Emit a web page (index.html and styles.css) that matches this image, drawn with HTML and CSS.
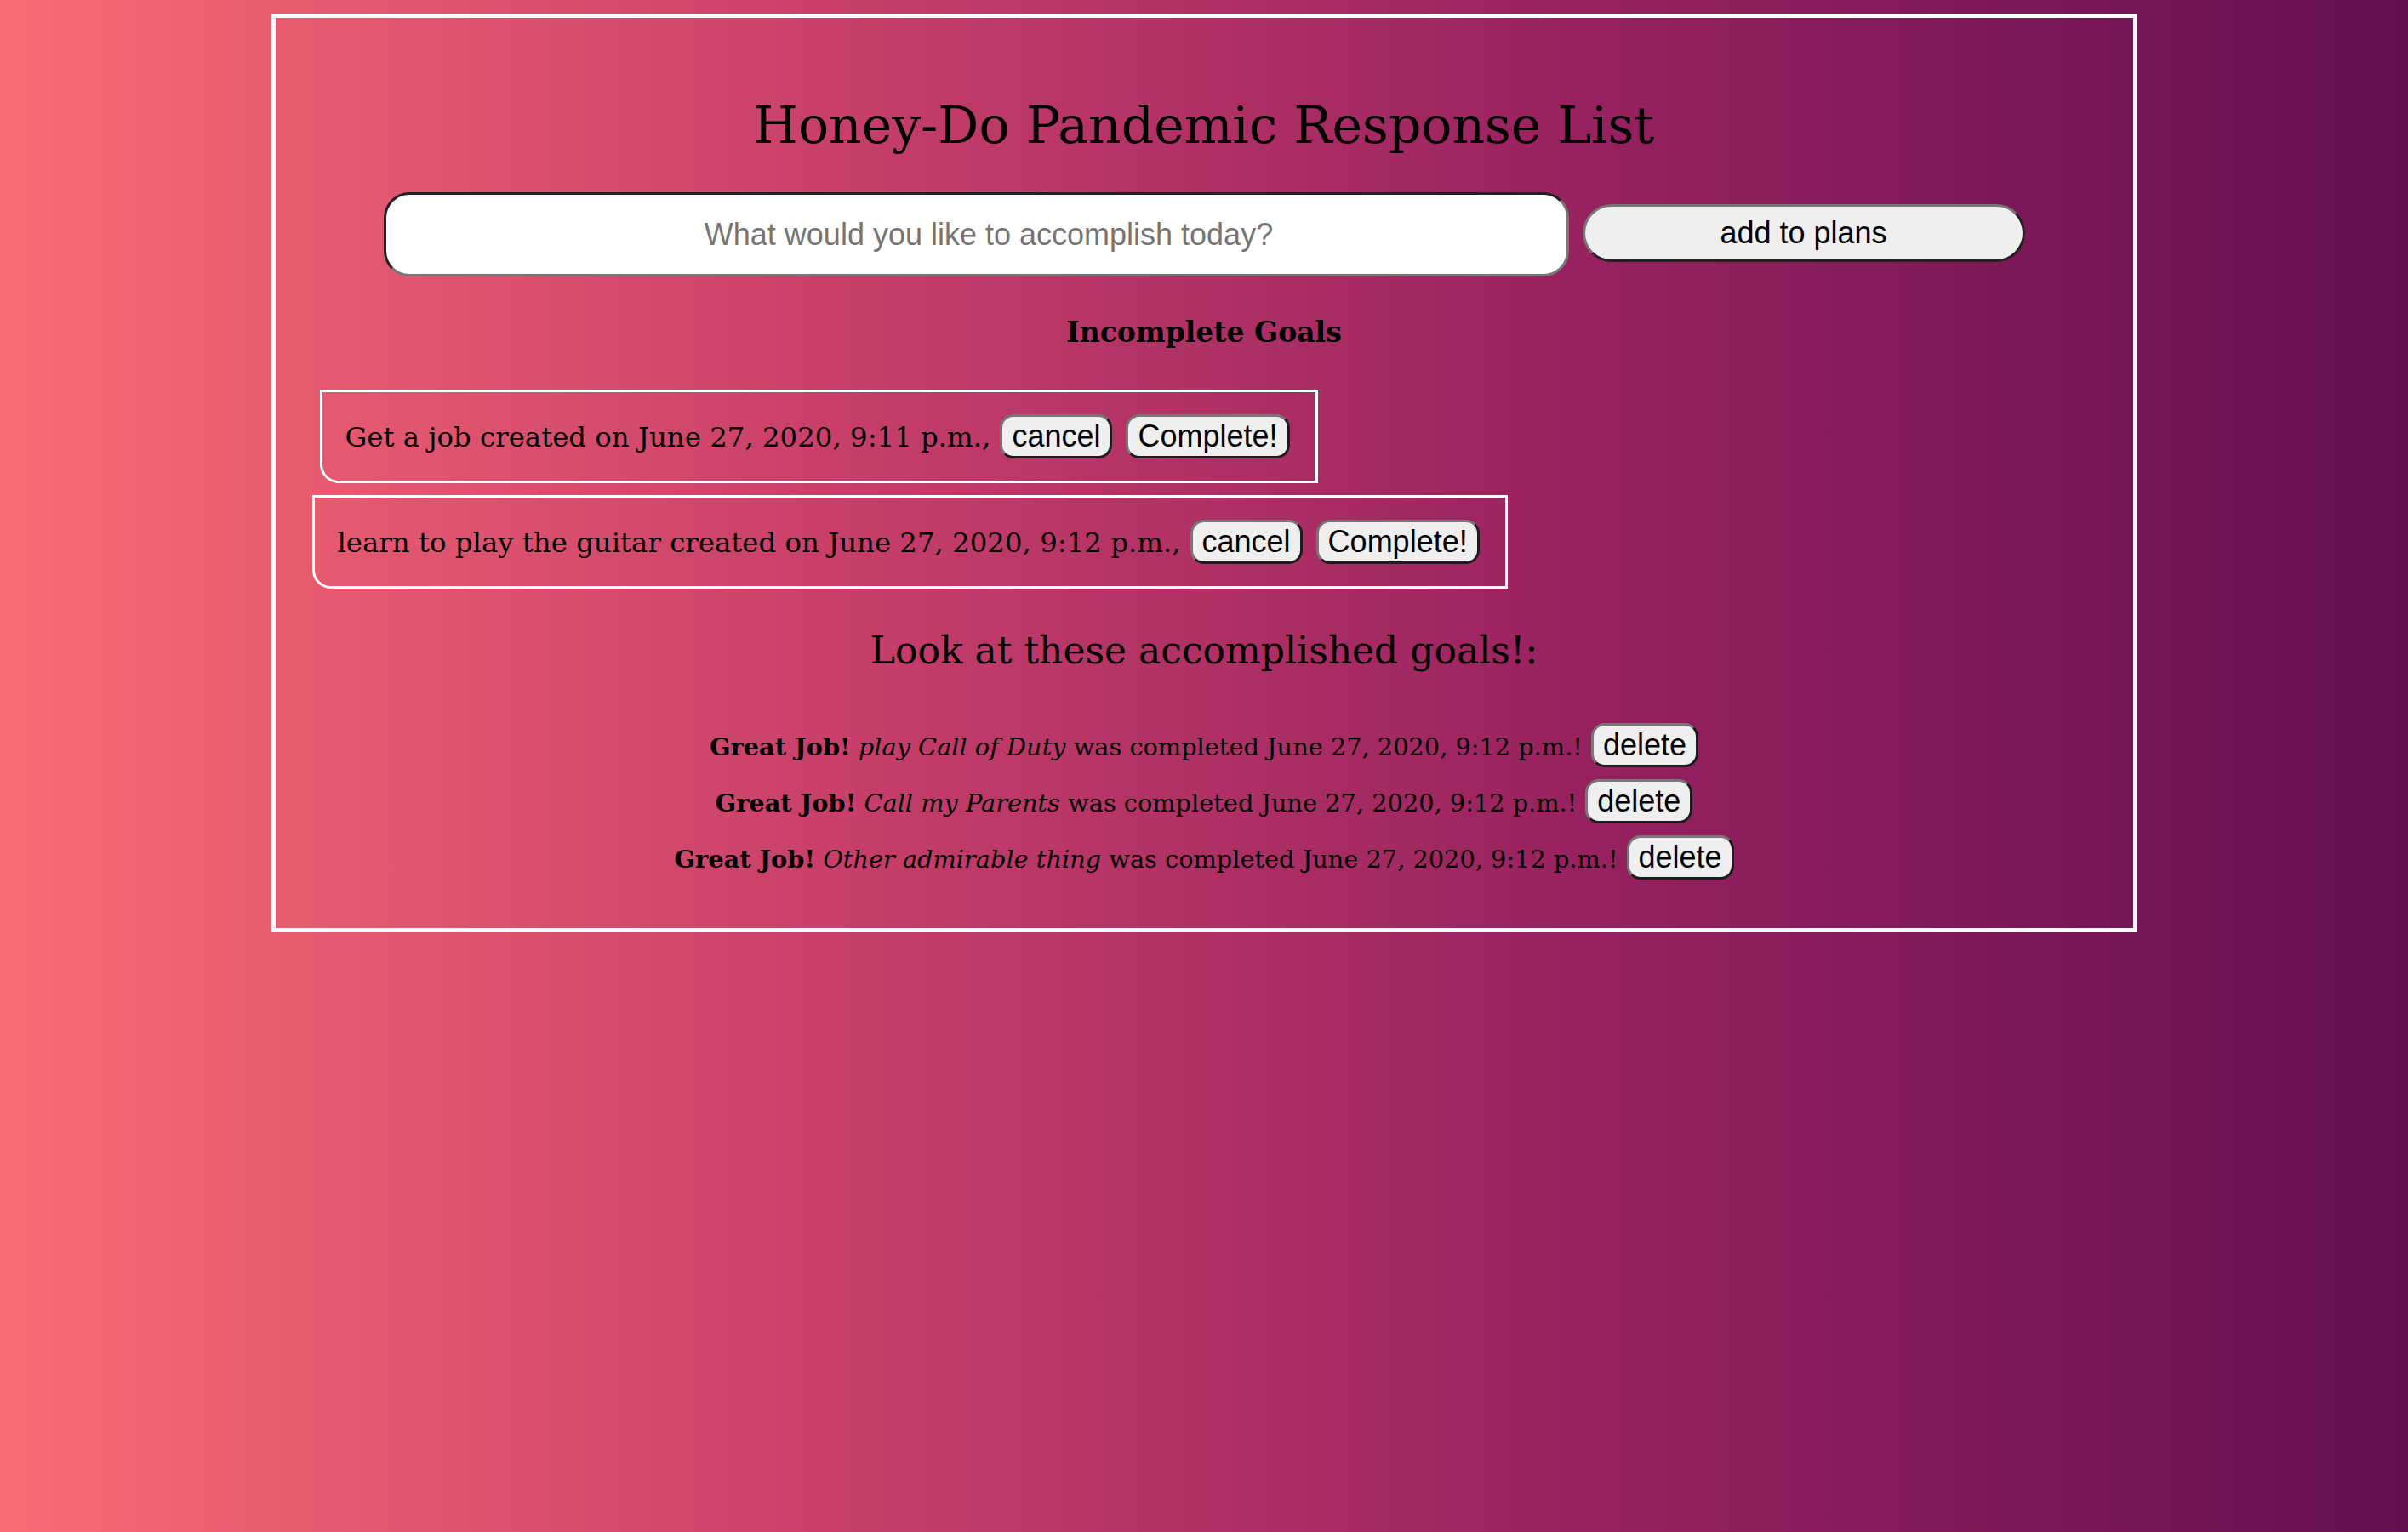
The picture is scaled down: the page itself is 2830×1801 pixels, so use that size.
FILE: index.html
```html
<!DOCTYPE html>
<html lang="en">
<head>
<meta charset="utf-8">
<title>Honey-Do Pandemic Response List</title>
<link rel="stylesheet" href="styles.css">
</head>
<body>
<main class="board">
  <h1 class="title">Honey-Do Pandemic Response List</h1>
  <form class="add-form">
    <input class="goal-input" type="text" placeholder="What would you like to accomplish today?">
    <button class="add-btn" type="button">add to plans</button>
  </form>
  <h3 class="section-title">Incomplete Goals</h3>
  <div class="item item-first">
    <span class="item-text">Get a job created on June 27, 2020, 9:11 p.m.,</span><button class="btn btn-cancel" type="button">cancel</button><button class="btn btn-complete" type="button">Complete!</button>
  </div>
  <div class="item item-second">
    <span class="item-text">learn to play the guitar created on June 27, 2020, 9:12 p.m.,</span><button class="btn btn-cancel" type="button">cancel</button><button class="btn btn-complete" type="button">Complete!</button>
  </div>
  <h2 class="done-title">Look at these accomplished goals!:</h2>
  <div class="done-list">
    <div class="done-line"><span><strong>Great Job!</strong> <em>play Call of Duty</em> was completed June 27, 2020, 9:12 p.m.!</span><button class="btn btn-delete" type="button">delete</button></div>
    <div class="done-line"><span><strong>Great Job!</strong> <em>Call my Parents</em> was completed June 27, 2020, 9:12 p.m.!</span><button class="btn btn-delete" type="button">delete</button></div>
    <div class="done-line"><span><strong>Great Job!</strong> <em>Other admirable thing</em> was completed June 27, 2020, 9:12 p.m.!</span><button class="btn btn-delete" type="button">delete</button></div>
  </div>
</main>
</body>
</html>
```
FILE: styles.css
```css
html {
  min-height: 100%;
}

body {
  margin: 0;
  min-height: 1801px;
  background: linear-gradient(to right, #f96b74 0%, #c73f6a 35%, #98225f 65%, #630f51 100%);
  font-family: "DejaVu Serif", "Liberation Serif", serif;
  color: #000;
}

.board {
  box-sizing: border-box;
  width: 2193px;
  margin: 16px auto 0;
  border: 5px solid #fff;
  padding: 0 0 48px;
}

.title {
  margin: 86px 0 0;
  font-size: 60px;
  line-height: 80px;
  font-weight: normal;
  text-align: center;
}

.add-form {
  margin: 39px 0 0;
  display: flex;
  justify-content: center;
  align-items: center;
  gap: 16px;
}

.goal-input {
  box-sizing: border-box;
  width: 1393px;
  height: 99px;
  border: 3px solid;
  border-color: #222 #777 #777 #222;
  border-radius: 30px;
  background: #fff;
  font-family: "Liberation Sans", Arial, sans-serif;
  font-size: 36px;
  text-align: center;
  padding: 0 20px 0 50px;
  outline: none;
}

.goal-input::placeholder {
  color: #757575;
}

.add-btn {
  box-sizing: border-box;
  width: 520px;
  height: 68px;
  border: 3px solid;
  border-color: #777 #222 #222 #777;
  border-radius: 34px;
  background: #efefef;
  font-family: "Liberation Sans", Arial, sans-serif;
  font-size: 36px;
  color: #000;
  padding: 0;
  margin-top: -3px;
}

.section-title {
  margin: 44px 0 0;
  font-size: 33px;
  line-height: 44px;
  font-weight: bold;
  text-align: center;
}

.item {
  display: flex;
  align-items: baseline;
  width: fit-content;
  border: 3px solid #fff;
  border-bottom-left-radius: 22px;
  padding: 26px 30px 26px 27px;
  font-size: 32.4px;
}

.item-first {
  margin: 45px 0 0 52px;
}

.item-second {
  margin: 14px 0 0 43px;
}

.btn {
  font-family: "Liberation Sans", Arial, sans-serif;
  font-size: 36px;
  line-height: normal;
  color: #000;
  background: #efefef;
  border: 3px solid;
  border-color: #777 #1c1c1c #1c1c1c #777;
  border-radius: 16px;
  padding: 2px 11px;
}

.btn-cancel {
  margin-left: 11px;
}

.btn-complete {
  margin-left: 16px;
}

.done-title {
  margin: 45px 0 0;
  font-size: 44px;
  line-height: 56px;
  font-weight: normal;
  text-align: center;
}

.done-list {
  margin-top: 52px;
}

.done-line {
  text-align: center;
  font-size: 28.8px;
  line-height: 66px;
}

.btn-delete {
  margin-left: 10px;
}
```
